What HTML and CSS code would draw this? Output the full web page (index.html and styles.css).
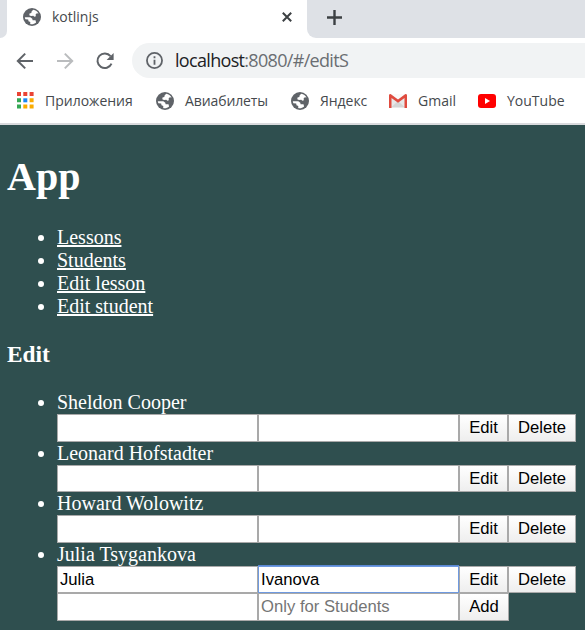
FILE: index.html
```html
<!DOCTYPE html>
<html lang="ru">
<head>
<meta charset="utf-8">
<title>kotlinjs</title>
<link rel="stylesheet" href="styles.css">
</head>
<body>
<svg width="0" height="0" class="defs" aria-hidden="true">
  <symbol id="globe" viewBox="0 0 18 18">
    <circle cx="9" cy="9" r="9" fill="#5f6368"/>
    <path fill="#fff" d="M10.300 1.800C12.600 2.200 14.600 3.600 15.600 5.600L13.800 5.300 12.600 6.600 12.900 8.300 11.300 8.700 10.300 7.700 8 7.900 6.300 7.300 6.500 5.600 8.300 5 8.700 3.200Z"/>
    <path fill="#fff" d="M1.800 9.200 7.300 9.300 9.300 10.700 9.600 12.200 12.500 12.300 13.100 14.400C11.400 15.900 9.300 16.500 7.200 16L7.300 14.100 5.500 13.200 5.200 11.400 2.300 11.300Z"/>
  </symbol>
</svg>
<div class="tabs">
  <div class="edge"></div>
  <div class="tab">
    <svg class="globe"><use href="#globe"/></svg>
    <span class="tab-title">kotlinjs</span>
    <svg class="close" viewBox="0 0 10 10"><path d="M.8.8 9.2 9.2M9.2.8.8 9.2"/></svg>
  </div>
  <div class="strip">
    <svg class="plus" viewBox="0 0 15 15"><path d="M7.5 0V15M0 7.5H15"/></svg>
  </div>
</div>
<div class="toolbar">
  <svg class="nav" viewBox="0 0 18 18"><path d="M17 9H2M9.2 1.6 1.8 9l7.4 7.4"/></svg>
  <svg class="nav off" viewBox="0 0 18 18"><path d="M1 9H16M8.8 1.6 16.2 9l-7.4 7.4"/></svg>
  <svg class="nav" viewBox="0 0 18 18"><path d="M15.5 11.6A7.3 7.3 0 1 1 14.5 4.2"/><path class="fill" d="M17.6 1V8H10.6Z"/></svg>
  <div class="omnibox">
    <svg class="info" viewBox="0 0 16 16"><circle cx="8" cy="8" r="7.1"/><path d="M8 7.2V12M8 4.1V5.8"/></svg>
    <span class="url"><b>localhost</b>:8080/#/editS</span>
  </div>
</div>
<div class="bookmarks">
  <svg class="apps" viewBox="0 0 17 17">
    <path fill="#ea4335" d="M0 0h4v4H0zM6.3 0h4v4h-4zM12.6 0h4v4h-4z"/>
    <path fill="#34a853" d="M0 6.3h4v4H0zM0 12.6h4v4H0z"/>
    <path fill="#1a87f5" d="M6.3 6.3h4v4h-4z"/>
    <path fill="#f9ab00" d="M12.6 6.3h4v4h-4zM6.3 12.6h4v4h-4zM12.6 12.6h4v4h-4z"/>
  </svg>
  <span class="bm b1">Приложения</span>
  <svg class="globe"><use href="#globe"/></svg>
  <span class="bm b2">Авиабилеты</span>
  <svg class="globe"><use href="#globe"/></svg>
  <span class="bm b3">Яндекс</span>
  <svg class="gmail" viewBox="0 0 18 14"><path fill="#e8e8e8" d="M1 0H17V14H1z"/><path fill="#d5d5d5" d="M2.5 13 9 7l6.500 6z"/><path fill="#fafafa" d="M2 0H16L9 6z"/><path fill="#e04b3f" d="M0 1.200Q0 0 1.500 0L9 5.600 16.500 0Q18 0 18 1.200V14H15.500V4L9 8.700 2.500 4V14H0z"/></svg>
  <span class="bm b4">Gmail</span>
  <svg class="youtube" viewBox="0 0 18 14"><rect width="18" height="14" rx="3" fill="#f00"/><path fill="#fff" d="M7 4v6l5-3z"/></svg>
  <span class="bm b5">YouTube</span>
</div>
<main>
  <h1>App</h1>
  <ul class="links">
    <li><a href="#/lessons">Lessons</a></li>
    <li><a href="#/students">Students</a></li>
    <li><a href="#/editL">Edit lesson</a></li>
    <li><a href="#/editS">Edit student</a></li>
  </ul>
  <h3>Edit</h3>
  <ul class="students">
    <li>Sheldon Cooper
      <div class="row"><input><input><button class="edit">Edit</button><button class="delete">Delete</button></div></li>
    <li>Leonard Hofstadter
      <div class="row short"><input><input><button class="edit">Edit</button><button class="delete">Delete</button></div></li>
    <li>Howard Wolowitz
      <div class="row"><input><input><button class="edit">Edit</button><button class="delete">Delete</button></div></li>
    <li>Julia Tsygankova
      <div class="row short"><input value="Julia"><input class="active" value="Ivanova"><button class="edit">Edit</button><button class="delete">Delete</button></div></li>
  </ul>
  <div class="row add"><input><input placeholder="Only for Students"><button class="edit plus-one">Add</button></div>
</main>
</body>
</html>
```
FILE: styles.css
```css
* { box-sizing: border-box; }
html, body { margin: 0; height: 630px; overflow: hidden; background: #2f4f4f; }
svg { display: block; flex: none; }
.defs { position: absolute; }
.tabs, .toolbar, .bookmarks { display: flex; align-items: center; font-family: "Open Sans", sans-serif; white-space: nowrap; }
.tabs { height: 38px; background: #fff; align-items: stretch; }
.edge { width: 7px; background: #dee1e6; border-bottom-right-radius: 8px; }
.tab { width: 300px; display: flex; align-items: center; padding: 0 15px 4px 16px; }
.globe { width: 18px; height: 18px; }
.tab-title { margin-left: 11px; font-size: 14px; letter-spacing: 0; color: #45494d; line-height: 20px; }
.close { width: 10px; height: 10px; margin-left: auto; }
.close path { stroke: #3c4043; stroke-width: 2; fill: none; }
.strip { flex: 1; background: #dee1e6; border-bottom-left-radius: 9px; padding: 10px 0 0 20px; }
.plus { width: 15px; height: 15px; }
.plus path { stroke: #3c4043; stroke-width: 2.4; }
.toolbar { height: 45px; background: #fff; padding-left: 16px; gap: 22px; }
.nav { width: 18px; height: 18px; fill: none; stroke: #5f6368; stroke-width: 2; }
.nav .fill { fill: #5f6368; stroke: none; }
.nav.off { stroke: #babcbe; }
.omnibox { flex: 1; height: 35px; margin-left: -4px; border-radius: 18px 0 0 18px; background: #f1f3f4; display: flex; align-items: center; padding-left: 14px; }
.info { width: 17px; height: 17px; fill: none; stroke: #5f6368; stroke-width: 1.7; }
.url { margin-left: 12px; font-size: 18px; letter-spacing: -.68px; color: #6a6e72; position: relative; top: -1px; }
.url b { font-weight: 400; color: #202124; }
.bookmarks { height: 42px; background: #fff; border-bottom: 2px solid #d9dadd; padding: 0 0 5px 17px; color: #45494d; }
.apps { width: 17px; height: 17px; }
.bm { font-size: 14px; line-height: 20px; flex: none; }
.b1 { width: 111px; margin-left: 11px; letter-spacing: 0; }
.b2 { width: 106px; margin-left: 11px; letter-spacing: -.1px; }
.b3 { width: 69px; margin-left: 11px; letter-spacing: -.05px; }
.b4 { width: 60px; margin-left: 11px; }
.b5 { margin-left: 11px; }
.gmail, .youtube { width: 18px; height: 14px; }
main { padding: 29px 0 0 7px; color: #fff; font: 20px/23px "Liberation Serif", serif; }
h1 { margin: 0 0 26px; font-size: 40px; line-height: 46px; }
h3 { margin: 23px 0 23px; font-size: 23.4px; line-height: 27px; }
ul { margin: 0; padding: 0 0 0 50px; }
a { color: #fff; }
.row { display: flex; height: 28px; }
.row.short { height: 27px; }
.row.add { margin-left: 50px; }
input, button { margin: 0; height: 100%; border: 1px solid #a9a9a9; border-radius: 0; font: 16.67px/20px "Liberation Sans", sans-serif; color: #000; outline: none; }
input { width: 201px; padding: 1px 1px 1px 2px; background: #fff; }
input.active { border: 1px solid #6f9ae0; box-shadow: 0 -1px #5b88d3; }
input::placeholder { color: #757575; }
button { padding: 0; background: linear-gradient(#fff, #eee); }
.edit { width: 49px; }
.delete { width: 68px; }
.plus-one { width: 50px; }
```
